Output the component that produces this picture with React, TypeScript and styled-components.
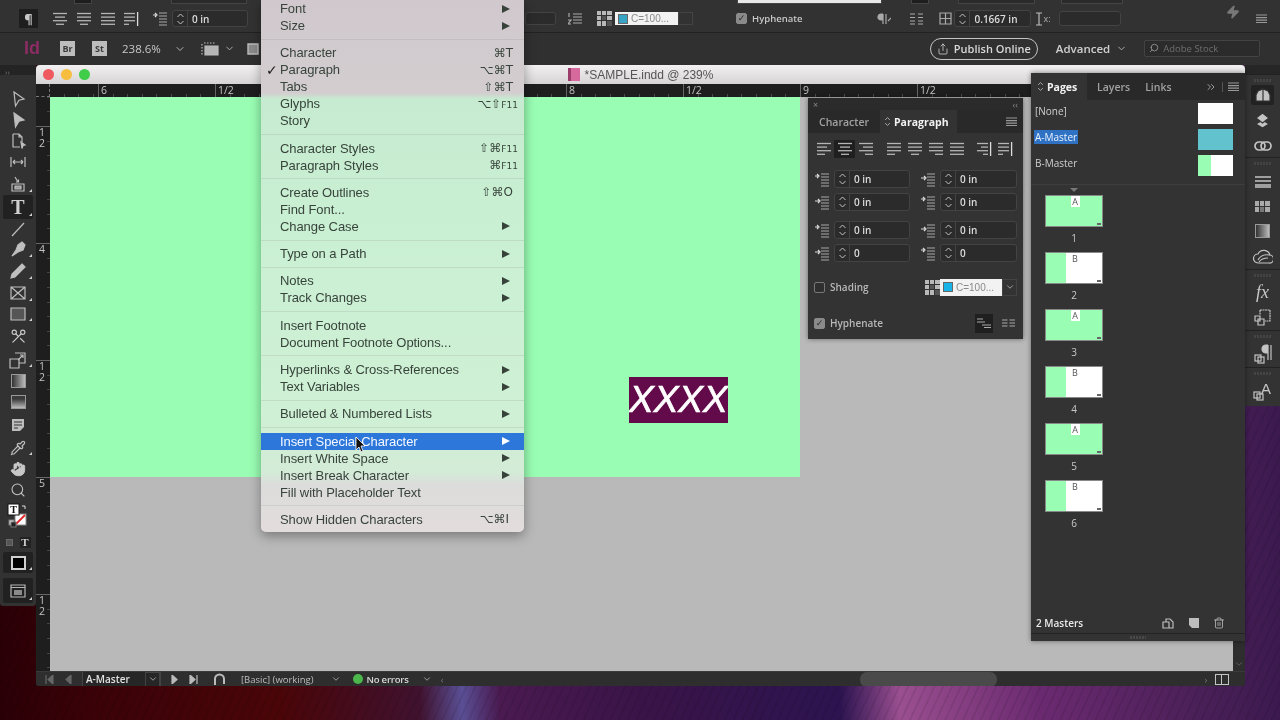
import React from "react";
import styled, { createGlobalStyle } from "styled-components";
import { ChevronDown, ChevronsRight, Hand, Pipette, Scissors, Search, Share, Trash2, Zap } from "lucide-react";

const GlobalStyle = createGlobalStyle`
  html, body { margin: 0; padding: 0; background: #2c0207; overflow: hidden; }
  * { box-sizing: border-box; }
`;

const UI = `"Open Sans", "Liberation Sans", sans-serif`;

const Desktop = styled.div`
  position: relative;
  width: 1280px;
  height: 720px;
  overflow: hidden;
  display: flex;
  flex-direction: column;
  font-family: ${UI};
  color: #d6d6d6;
  filter: blur(0.35px);
  background:
    repeating-linear-gradient(115deg, rgba(0, 0, 0, 0.08) 0 2px, transparent 2px 8px),
    linear-gradient(90deg, #2a0006 0, #3a0208 90px, #4a0508 280px, #40122f 420px, #5a4f95 462px, #4a1a50 500px, #3a1448 640px, #2c1450 840px, #9a4f90 900px, #6b2a70 1040px, #4a2058 1200px, #3c1a50 100%);
`;

/* application bars */
const ControlBar = styled.div`
  height: 33px;
  background: #323232;
  border-bottom: 1px solid #222;
  flex: none;
`;
const TopSlice = styled.div`
  height: 5px;
  display: flex;
  align-items: flex-start;
`;
const SliceBox = styled.div<{ $w: number; $ml: number; $bg?: string }>`
  width: ${(p) => p.$w}px;
  height: 4px;
  margin-left: ${(p) => p.$ml}px;
  background: ${(p) => p.$bg ?? "#2a2a2a"};
  border: 1px solid #444;
  border-top: none;
`;
const ControlRow = styled.div`
  height: 27px;
  display: flex;
  align-items: center;
  font-size: 10px;
`;
const Gap = styled.span<{ $w: number }>`
  flex: none;
  width: ${(p) => p.$w}px;
`;
const ParaButton = styled.div`
  width: 19px;
  height: 19px;
  background: #1e1e1e;
  display: flex;
  align-items: center;
  justify-content: center;
  font-size: 13px;
  font-weight: 700;
  color: #c8c8c8;
`;
const ControlLabel = styled.span`
  font-size: 9.5px;
  font-weight: 600;
  color: #c8c8c8;
`;
const AxisLabel = styled.span`
  font-size: 9px;
  color: #b0b0b0;
`;
const BoltMark = styled(Zap)`
  margin-top: -14px;
`;
const AppBar = styled.div`
  height: 32px;
  flex: none;
  display: flex;
  align-items: center;
  padding-bottom: 1px;
  background: #303030;
  font-size: 11.5px;
  color: #c8c8c8;
`;
const AppLogo = styled.span`
  font-size: 18px;
  font-weight: 700;
  color: #8b2c63;
  font-family: "Liberation Sans", sans-serif;
`;
const BridgeChip = styled.span`
  width: 15px;
  height: 15px;
  background: #bdbdbd;
  color: #3a3a3a;
  font-size: 9px;
  font-weight: 700;
  display: flex;
  align-items: center;
  justify-content: center;
`;
const PublishPill = styled.div`
  width: 108px;
  height: 22px;
  border: 1px solid #c4c4c4;
  border-radius: 11px;
  display: flex;
  align-items: center;
  justify-content: center;
  gap: 5px;
  font-size: 11px;
  font-weight: 600;
  color: #d8d8d8;
`;
const AdvancedLabel = styled.span`
  font-size: 11.5px;
  font-weight: 600;
  color: #cfcfcf;
`;
const StockSearch = styled.div`
  width: 116px;
  height: 17px;
  margin-top: -1px;
  background: #2b2b2b;
  border: 1px solid #434343;
  border-radius: 2px;
  display: flex;
  align-items: center;
  gap: 4px;
  padding-left: 4px;
  font-size: 9.5px;
  color: #6f6f6f;
`;
const StockLens = styled(Search)`
  transform: scaleX(-1);
`;

/* workspace */
const Workspace = styled.div`
  flex: 1;
  display: flex;
  align-items: flex-start;
  min-height: 0;
`;
const ToolPanel = styled.div`
  width: 36px;
  height: 541px;
  flex: none;
  background: #323232;
  border-radius: 0 0 3px 3px;
  display: flex;
  flex-direction: column;
  align-items: center;
`;
const ToolHeader = styled.div`
  width: 100%;
  height: 23px;
  flex: none;
  font-size: 8px;
  color: #777;
  padding: 1px 0 0 5px;
  background: linear-gradient(#242424 0 10px, #323232 10px);
`;
const ToolSlot = styled.div<{ $h: number; $corner?: boolean; $active?: boolean }>`
  position: relative;
  width: 30px;
  height: ${(p) => p.$h}px;
  flex: none;
  display: flex;
  align-items: center;
  justify-content: center;
  color: #bdbdbd;
  border-radius: 2px;
  background: ${(p) => (p.$active ? "#212121" : "transparent")};
  &::after {
    content: "";
    display: ${(p) => (p.$corner ? "block" : "none")};
    position: absolute;
    right: 1px;
    bottom: 3px;
    border-left: 3px solid transparent;
    border-bottom: 3px solid #cfcfcf;
  }
`;
const GlyphTool = styled.span`
  font: 700 20px "Liberation Serif", serif;
  color: #cfcfcf;
  line-height: 1;
`;
const ScissorMark = styled(Scissors)`
  transform: scaleX(-1) rotate(90deg);
`;
const GradientChip = styled.span<{ $feather?: boolean }>`
  width: 15px;
  height: 14px;
  border: 1px solid #999;
  background: ${(p) =>
    p.$feather ? "linear-gradient(#3a3a3a 25%, #bbb)" : "linear-gradient(90deg, #333, #bbb)"};
`;
const ModeChip = styled.span`
  width: 15px;
  height: 14px;
  border: 2px solid #d0d0d0;
  background: #000;
`;
const FormatRow = styled.span`
  display: flex;
  align-items: center;
  gap: 7px;
`;
const FormatBox = styled.span`
  width: 7px;
  height: 7px;
  background: #555;
  border: 1px solid #6a6a6a;
`;
const FormatT = styled.span`
  width: 11px;
  height: 11px;
  background: #222;
  color: #d0d0d0;
  font: 700 11px/11px "Liberation Serif", serif;
  text-align: center;
`;

const DocWindow = styled.div`
  width: 1209px;
  height: 621px;
  flex: none;
  display: flex;
  flex-direction: column;
  background: #2e2e2e;
  border-radius: 4px 4px 3px 3px;
  overflow: hidden;
`;
const TitleBar = styled.div`
  height: 19px;
  flex: none;
  display: flex;
  align-items: center;
  background: linear-gradient(#f2f0f0, #d6d4d4);
  font: 12px "Liberation Sans", sans-serif;
  color: #555;
`;
const TitleSide = styled.div`
  flex: 1;
  display: flex;
  align-items: center;
  gap: 7px;
  padding-left: 7px;
`;
const Light = styled.span<{ $c: string }>`
  width: 11px;
  height: 11px;
  border-radius: 50%;
  background: ${(p) => p.$c};
`;
const TitleText = styled.div`
  display: flex;
  align-items: center;
  gap: 5px;
`;
const DocBadge = styled.span`
  width: 12px;
  height: 13px;
  background: #d66a9c;
  border-left: 3px solid #9c3d6c;
`;
const HRuler = styled.div`
  height: 13px;
  flex: none;
  display: flex;
  background: #1e1e1e;
  overflow: hidden;
  font: 10.5px "Open Sans", sans-serif;
  color: #c4c4c4;
`;
const RulerOrigin = styled.div`
  width: 14px;
  flex: none;
  border-right: 1px dashed #777;
  border-bottom: 1px dashed #777;
`;
const RulerLead = styled.div`
  width: 48px;
  flex: none;
  background-image: repeating-linear-gradient(90deg, transparent 0 13.6px, #4c4c4c 13.6px 14.6px);
  background-size: 100% 3px;
  background-position: 0 bottom;
  background-repeat: no-repeat;
`;
const RulerCell = styled.div`
  width: 117px;
  flex: none;
  border-left: 1px solid #666;
  padding-left: 2px;
  line-height: 13px;
  background-image: repeating-linear-gradient(90deg, transparent 0 13.6px, #4c4c4c 13.6px 14.6px);
  background-size: 100% 3px;
  background-position: 0 bottom;
  background-repeat: no-repeat;
`;
const DocBody = styled.div`
  flex: 1;
  display: flex;
  min-height: 0;
`;
const VRuler = styled.div`
  width: 14px;
  flex: none;
  background: #1e1e1e;
  overflow: hidden;
  font: 10.5px/11px "Open Sans", sans-serif;
  color: #c4c4c4;
`;
const VRulerCell = styled.div<{ $h: number; $bare?: boolean }>`
  height: ${(p) => p.$h}px;
  border-top: ${(p) => (p.$bare ? "none" : "1px solid #666")};
  padding: 0 0 0 3px;
  white-space: pre-line;
  background-image: repeating-linear-gradient(0deg, transparent 0 13.6px, #444 13.6px 14.6px);
  background-size: 3px 100%;
  background-position: right 0;
  background-repeat: no-repeat;
`;
const Pasteboard = styled.div`
  flex: 1;
  background: #b9b9b9;
  min-width: 0;
`;
const SpreadPage = styled.div`
  position: relative;
  width: 750px;
  height: 380px;
  background: #99fdb3;
`;
const TextFrame = styled.div`
  position: absolute;
  left: 579px;
  top: 280px;
  width: 99px;
  height: 46px;
  background: #620a4a;
  overflow: hidden;
  color: #fff;
  font: italic 37px/46px "Liberation Sans", sans-serif;
  -webkit-text-stroke: 0.7px #fff;
  white-space: nowrap;
`;
const ScrollColumn = styled.div`
  width: 12px;
  flex: none;
  background: #2e2e2e;
  display: flex;
  align-items: flex-end;
  justify-content: center;
  padding-bottom: 2px;
  color: #666;
`;
const StatusBar = styled.div`
  height: 15px;
  flex: none;
  display: flex;
  align-items: center;
  background: #2e2e2e;
  border-top: 1px solid #3a3a3a;
  font-size: 9.5px;
  color: #bdbdbd;
`;
const PageField = styled.div`
  width: 79px;
  height: 15px;
  flex: none;
  display: flex;
  align-items: center;
  justify-content: space-between;
  border: 1px solid #444;
  border-width: 0 1px;
  background: #262626;
  padding-left: 3px;
  font-size: 10px;
  font-weight: 600;
  color: #e2e2e2;
`;
const NoErrorsDot = styled.span`
  width: 10px;
  height: 10px;
  border-radius: 50%;
  background: #4cb84c;
`;
const NoErrors = styled.span`
  font-weight: 600;
  letter-spacing: -0.2px;
  color: #d8d8d8;
`;
const DimGlyph = styled.span`
  color: #777;
`;
const ScrollThumb = styled.span`
  width: 137px;
  height: 15px;
  flex: none;
  background: #4a4a4a;
  border-radius: 7px;
`;
const SplitIcon = styled.span`
  width: 14px;
  height: 11px;
  flex: none;
  border: 1px solid #c4c4c4;
  background: linear-gradient(90deg, transparent 5px, #c4c4c4 5px 6px, transparent 6px);
`;

/* right dock */
const Dock = styled.div`
  width: 35px;
  height: 341px;
  flex: none;
  background: #333;
  display: flex;
  flex-direction: column;
  align-items: center;
  color: #bdbdbd;
`;
const DockHead = styled.div`
  width: 100%;
  height: 9px;
  flex: none;
  background: #262626;
`;
const DockGrip = styled.div`
  width: 100%;
  height: 11px;
  flex: none;
  border-top: 1px solid #222;
  display: flex;
  justify-content: center;
  padding-top: 4px;
  &::after {
    content: "";
    width: 17px;
    height: 3px;
    background: repeating-linear-gradient(90deg, #444 0 2px, transparent 2px 3px);
  }
`;
const DockSlot = styled.div<{ $h?: number; $active?: boolean }>`
  width: 23px;
  height: ${(p) => p.$h ?? 25}px;
  flex: none;
  display: flex;
  align-items: center;
  justify-content: center;
  background: ${(p) => (p.$active ? "#222" : "transparent")};
  border-radius: 2px;
`;
const FxGlyph = styled.span`
  font: italic 18px "Liberation Serif", serif;
  color: #c8c8c8;
`;

/* floating panels */
const ParagraphPanel = styled.div`
  position: absolute;
  left: 808px;
  top: 98px;
  width: 215px;
  height: 241px;
  z-index: 5;
  background: #333;
  box-shadow: 0 0 5px rgba(0, 0, 0, 0.45);
  font-size: 10px;
  padding-bottom: 6px;
`;
const PanelHead = styled.div`
  height: 12px;
  display: flex;
  align-items: center;
  justify-content: space-between;
  padding: 0 5px;
  background: #2b2b2b;
  font-size: 9px;
  color: #8a8a8a;
`;
const TabStrip = styled.div<{ $h: number }>`
  height: ${(p) => p.$h}px;
  display: flex;
  align-items: stretch;
  background: #292929;
`;
const Tab = styled.div<{ $active?: boolean; $w?: number; $ml?: number; $pl?: number }>`
  width: ${(p) => (p.$w ? `${p.$w}px` : "auto")};
  display: flex;
  align-items: center;
  gap: 2px;
  padding-left: ${(p) => p.$pl ?? 0}px;
  margin-left: ${(p) => p.$ml ?? 0}px;
  background: ${(p) => (p.$active ? "#333" : "transparent")};
  color: ${(p) => (p.$active ? "#f2f2f2" : "#a2a2a2")};
  font-weight: ${(p) => (p.$active ? 700 : 600)};
  font-size: 10.5px;
`;
const TabEnd = styled.div`
  margin-left: auto;
  display: flex;
  align-items: center;
  gap: 5px;
  padding-right: 6px;
  color: #999;
`;
const TabDivider = styled.span`
  width: 1px;
  height: 10px;
  background: #555;
`;
const AlignRow = styled.div`
  height: 18px;
  margin-top: 7px;
  padding-left: 5px;
  display: flex;
`;
const AlignSlot = styled.div<{ $ml?: number; $active?: boolean }>`
  width: 21px;
  height: 18px;
  margin-left: ${(p) => p.$ml ?? 0}px;
  display: flex;
  align-items: center;
  justify-content: center;
  background: ${(p) => (p.$active ? "#1f1f1f" : "transparent")};
`;
const FieldRow = styled.div<{ $mt: number }>`
  margin-top: ${(p) => p.$mt}px;
  padding-left: 7px;
  display: flex;
  gap: 11px;
`;
const FieldCell = styled.div`
  display: flex;
  align-items: center;
  gap: 4px;
`;
const SpinField = styled.div<{ $w: number; $h?: number }>`
  width: ${(p) => p.$w}px;
  height: ${(p) => p.$h ?? 18}px;
  flex: none;
  display: flex;
  align-items: center;
  background: #2b2b2b;
  border: 1px solid #434343;
  border-radius: 3px;
  font-size: 10px;
  font-weight: 600;
  color: #dcdcdc;
`;
const SpinArrows = styled.span`
  width: 15px;
  height: 100%;
  flex: none;
  display: flex;
  align-items: center;
  justify-content: center;
  border-right: 1px solid #434343;
  margin-right: 4px;
`;
const OptionRow = styled.div<{ $mt: number; $h: number }>`
  margin-top: ${(p) => p.$mt}px;
  height: ${(p) => p.$h}px;
  padding: 0 6px;
  display: flex;
  align-items: center;
  font-weight: 600;
  font-size: 10px;
  color: #b8b8b8;
`;
const CheckBox = styled.span<{ $on?: boolean }>`
  width: 11px;
  height: 11px;
  flex: none;
  margin-right: 5px;
  border: 1px solid ${(p) => (p.$on ? "#8a8a8a" : "#777")};
  background: ${(p) => (p.$on ? "#8a8a8a" : "#2f2f2f")};
  border-radius: 2px;
  color: #2a2a2a;
  font: 700 9px/9px "DejaVu Sans", sans-serif;
  text-align: center;
`;
const Swatch = styled.div<{ $w: number; $h: number }>`
  width: ${(p) => p.$w}px;
  height: ${(p) => p.$h}px;
  flex: none;
  display: flex;
  align-items: center;
  gap: 3px;
  padding-left: 3px;
  background: #f2f2f2;
  color: #8a8a8a;
  font: 10px "Liberation Sans", sans-serif;
`;
const SwatchChip = styled.span<{ $c: string }>`
  width: 10px;
  height: 10px;
  flex: none;
  background: ${(p) => p.$c};
  border: 1px solid #666;
`;
const SwatchArrow = styled.span<{ $h: number }>`
  width: 15px;
  height: ${(p) => p.$h}px;
  flex: none;
  display: flex;
  align-items: center;
  justify-content: center;
  border: 1px solid #434343;
  color: #aaa;
`;
const HyphenIconBox = styled.span<{ $on?: boolean }>`
  width: 18px;
  height: 19px;
  flex: none;
  display: flex;
  align-items: center;
  justify-content: center;
  background: ${(p) => (p.$on ? "#1f1f1f" : "transparent")};
`;
const Push = styled.span`
  margin-left: auto;
`;

const PagesPanel = styled.div`
  position: absolute;
  left: 1031px;
  top: 73px;
  width: 214px;
  height: 568px;
  z-index: 5;
  background: #333;
  box-shadow: 0 0 5px rgba(0, 0, 0, 0.45);
  display: flex;
  flex-direction: column;
  font-size: 10px;
`;
const MasterList = styled.div`
  padding: 0 12px 6px 3px;
  border-bottom: 1px solid #3e3e3e;
`;
const MasterRow = styled.div`
  height: 26px;
  display: flex;
  align-items: center;
  justify-content: space-between;
  font-size: 10px;
  color: #cfcfcf;
`;
const MasterName = styled.span<{ $sel?: boolean }>`
  margin-top: -4px;
  padding: 0 1px;
  color: ${(p) => (p.$sel ? "#e8f2ff" : "#cfcfcf")};
  background: ${(p) => (p.$sel ? "#2f72c4" : "transparent")};
`;
const MasterThumb = styled.span<{ $bg: string }>`
  width: 35px;
  height: 21px;
  flex: none;
  background: ${(p) => p.$bg};
`;
const ThumbList = styled.div`
  padding-left: 14px;
  width: 72px;
`;
const ThumbMark = styled.div`
  width: 58px;
  height: 10px;
  display: flex;
  justify-content: center;
  padding-top: 3px;
  &::after {
    content: "";
    width: 0;
    height: 0;
    border: 4px solid transparent;
    border-top-color: #777;
    border-bottom: none;
  }
`;
const PageThumb = styled.div<{ $b: boolean }>`
  position: relative;
  width: 58px;
  height: 32px;
  border: 1px solid #888;
  background: ${(p) =>
    p.$b ? "linear-gradient(90deg, #99fdb3 20px, #fff 20px)" : "#99fdb3"};
  text-align: center;
  font: 9px/11px "Open Sans", sans-serif;
  color: #555;
  &::after {
    content: "";
    position: absolute;
    right: 1px;
    bottom: 1px;
    width: 4px;
    height: 2px;
    background: #666;
  }
`;
const ThumbMaster = styled.span<{ $b: boolean }>`
  display: inline-block;
  width: 9px;
  height: 11px;
  margin-left: 2px;
  background: ${(p) => (p.$b ? "transparent" : "#fff")};
`;
const ThumbNo = styled.div`
  width: 58px;
  height: 25px;
  text-align: center;
  line-height: 23px;
  font-size: 10px;
  color: #c9c9c9;
`;
const PanelFoot = styled.div`
  margin-top: auto;
  height: 21px;
  display: flex;
  align-items: center;
  padding: 0 20px 0 5px;
  color: #bdbdbd;
  font-size: 10px;
  font-weight: 600;
  border-bottom: 1px solid #222;
`;
const FootLabel = styled.span`
  color: #eaeaea;
  flex: 1;
`;
const FootIcons = styled.span`
  display: flex;
  align-items: center;
  gap: 14px;
`;
const PanelGrip = styled.div`
  height: 7px;
  display: flex;
  justify-content: center;
  &::after {
    content: "";
    margin-top: 2px;
    width: 16px;
    height: 3px;
    background: repeating-linear-gradient(90deg, #484848 0 2px, transparent 2px 3px);
  }
`;

/* Type menu */
const Menu = styled.div`
  position: absolute;
  left: 261px;
  top: 0;
  width: 263px;
  height: 532px;
  z-index: 10;
  padding-bottom: 4px;
  border-radius: 0 0 5px 5px;
  box-shadow: 0 4px 12px rgba(0, 0, 0, 0.35);
  background: linear-gradient(
    #d0c8cc 0,
    #d3cdd0 93px,
    #c6ebd0 99px,
    #caf0d3 240px,
    #cff0d4 420px,
    #d3ebd7 473px,
    #dcdcdb 485px,
    #e3dcdd 100%
  );
  font: 13px "Liberation Sans", "DejaVu Sans", sans-serif;
  letter-spacing: -0.08px;
  color: #37433b;
`;
const MenuRow = styled.div<{ $active?: boolean }>`
  height: 17px;
  display: flex;
  align-items: center;
  color: ${(p) => (p.$active ? "#f4f8ff" : "inherit")};
  background: ${(p) => (p.$active ? "#2d77da" : "transparent")};
`;
const CheckCol = styled.span`
  width: 19px;
  flex: none;
  padding-left: 5px;
  font-size: 14px;
  color: #1d1d1d;
`;
const Shortcut = styled.span<{ $pr: number }>`
  margin-left: auto;
  padding-right: ${(p) => p.$pr}px;
  font-family: "DejaVu Sans", sans-serif;
  font-size: 12px;
  letter-spacing: 0;
`;
const SmallKey = styled.span`
  font-size: 9px;
`;
const MenuArrow = styled.span<{ $active?: boolean }>`
  margin-left: auto;
  margin-right: 14px;
  border-left: 8px solid ${(p) => (p.$active ? "#fff" : "#36423a")};
  border-top: 4px solid transparent;
  border-bottom: 4px solid transparent;
`;
const MenuSep = styled.div`
  height: 10.3px;
  display: flex;
  align-items: center;
  &::after {
    content: "";
    width: 100%;
    height: 1px;
    background: rgba(140, 140, 140, 0.2);
  }
`;
const Cursor = styled.svg`
  position: absolute;
  left: 355px;
  top: 436px;
  z-index: 12;
`;

/* drawings */
const Ic = styled.svg<{ $c?: string; $fill?: string; $sw?: number }>`
  flex: none;
  fill: ${(p) => p.$fill ?? "none"};
  stroke: ${(p) => p.$c ?? "#bdbdbd"};
  stroke-width: ${(p) => p.$sw ?? 1.2};
`;

const alignShapes: Record<string, number[][]> = {
  left: [[1, 15], [1, 11], [1, 15], [1, 9]],
  center: [[1, 15], [3, 13], [1, 15], [4, 12]],
  right: [[1, 15], [5, 15], [1, 15], [7, 15]],
  just: [[1, 15], [1, 15], [1, 15], [1, 9]],
  justC: [[1, 15], [1, 15], [1, 15], [4, 12]],
  justR: [[1, 15], [1, 15], [1, 15], [7, 15]],
  justA: [[1, 15], [1, 15], [1, 15], [1, 15]],
};

function AlignIcon({ kind, spine }: { kind: string; spine?: boolean }) {
  return (
    <Ic width="16" height="14" viewBox="0 0 16 14" $sw={1.3} $c="#b5b5b5">
      {alignShapes[kind].map((l, i) => (
        <line key={i} x1={l[0]} x2={spine ? l[1] - 3 : l[1]} y1={1.5 + i * 3.6} y2={1.5 + i * 3.6} />
      ))}
      {spine && <line x1="14.6" x2="14.6" y1="0" y2="14" stroke="#ddd" />}
    </Ic>
  );
}

function IndentIcon({ v }: { v: number }) {
  return (
    <Ic width="15" height="15" viewBox="0 0 15 15" $c="#a8a8a8">
      <path d="M6 2h8M6 5h8M6 8h8M6 11h8M6 14h8" />
      <path d={v % 2 ? "M0 6h4M3 4l2 2-2 2" : "M0 4h3M2 2l2 2-2 2"} stroke="#ddd" />
    </Ic>
  );
}

function UpDown({ h = 14 }: { h?: number }) {
  return (
    <Ic width="9" height={h} viewBox="0 0 9 14" $c="#c4c4c4" $sw={1}>
      <path d="M1.500 5l3-3 3 3M1.500 9l3 3 3-3" />
    </Ic>
  );
}

function Chevron({ s = 10, c = "#b5b5b5" }: { s?: number; c?: string }) {
  return <ChevronDown size={s} color={c} strokeWidth={2} />;
}

function SwatchGrid() {
  return (
    <Ic width="15" height="15" viewBox="0 0 15 15" $c="none" $fill="#b9b9b9">
      <path d="M0 0h4v4H0zM5 0h4v4H5zM10 0h5v4h-5zM0 5h4v4H0zM10 5h5v4h-5zM5 10h4v5H5zM0 10h4v5H0z" />
      <path d="M5 5h4v4H5zM10 10h5v5h-5z" fill="#555" />
    </Ic>
  );
}

function MenuLines() {
  return (
    <Ic width="11" height="9" viewBox="0 0 11 9" $c="#999">
      <path d="M0 1h11M0 3.600h11M0 6.200h11M0 8.600h11" />
    </Ic>
  );
}

function OverlapBadge() {
  return (
    <g fill="none" stroke="#c4c4c4">
      <rect x="1" y="11" width="6" height="6" />
      <rect x="4" y="13" width="6" height="6" />
    </g>
  );
}

const menuRows: Array<
  | "sep"
  | { label: string; keys?: React.ReactNode; arrow?: boolean; check?: boolean; active?: boolean; pr?: number }
> = [
  { label: "Font", arrow: true },
  { label: "Size", arrow: true },
  "sep",
  { label: "Character", keys: "⌘T" },
  { label: "Paragraph", keys: "⌥⌘T", check: true },
  { label: "Tabs", keys: "⇧⌘T" },
  { label: "Glyphs", keys: <>⌥⇧<SmallKey>F11</SmallKey></>, pr: 6 },
  { label: "Story" },
  "sep",
  { label: "Character Styles", keys: <>⇧⌘<SmallKey>F11</SmallKey></>, pr: 6 },
  { label: "Paragraph Styles", keys: <>⌘<SmallKey>F11</SmallKey></>, pr: 6 },
  "sep",
  { label: "Create Outlines", keys: "⇧⌘O" },
  { label: "Find Font..." },
  { label: "Change Case", arrow: true },
  "sep",
  { label: "Type on a Path", arrow: true },
  "sep",
  { label: "Notes", arrow: true },
  { label: "Track Changes", arrow: true },
  "sep",
  { label: "Insert Footnote" },
  { label: "Document Footnote Options..." },
  "sep",
  { label: "Hyperlinks & Cross-References", arrow: true },
  { label: "Text Variables", arrow: true },
  "sep",
  { label: "Bulleted & Numbered Lists", arrow: true },
  "sep",
  { label: "Insert Special Character", arrow: true, active: true },
  { label: "Insert White Space", arrow: true },
  { label: "Insert Break Character", arrow: true },
  { label: "Fill with Placeholder Text" },
  "sep",
  { label: "Show Hidden Characters", keys: "⌥⌘I", pr: 15 },
];

const rulerLabels = ["6", "1/2", "", "", "8", "1/2", "9", "1/2", "", ""];
const vRuler = ["1\n2", "4", "1\n2", "5", "1\n2"];
const pageThumbs = ["A", "B", "A", "B", "A", "B"];

function Tools() {
  return (
    <ToolPanel>
      <ToolHeader>››</ToolHeader>
      <ToolSlot $h={21}>
        <Ic width="18" height="18" viewBox="0 0 18 18"><path d="M5 2l10 7-5 1.200L6.500 16z" /></Ic>
      </ToolSlot>
      <ToolSlot $h={21}>
        <Ic width="18" height="18" viewBox="0 0 18 18" $fill="#bdbdbd"><path d="M5 2l10 7-5 1.200L6.500 16z" /></Ic>
      </ToolSlot>
      <ToolSlot $h={21}>
        <Ic width="18" height="18" viewBox="0 0 18 18">
          <path d="M4 2h6l3 3v5M13 5h-3V2M4 2v13h7" />
          <path d="M12 10l4 3-2 .5-1 3z" fill="#bdbdbd" />
        </Ic>
      </ToolSlot>
      <ToolSlot $h={21}>
        <Ic width="18" height="18" viewBox="0 0 18 18"><path d="M2 4v10M16 4v10M4 9h10M4 9l2-2M4 9l2 2M14 9l-2-2M14 9l-2 2" /></Ic>
      </ToolSlot>
      <ToolSlot $h={23} $corner>
        <Ic width="18" height="18" viewBox="0 0 18 18">
          <path d="M3 9h12v7H3z" />
          <path d="M6 11h6v3H6z" fill="#999" />
          <path d="M6 2l3 5M7 7h2.500V4.500" />
        </Ic>
      </ToolSlot>
      <ToolSlot $h={24} $corner $active>
        <GlyphTool>T</GlyphTool>
      </ToolSlot>
      <ToolSlot $h={19}>
        <Ic width="18" height="18" viewBox="0 0 18 18"><path d="M3 16L15 3" /></Ic>
      </ToolSlot>
      <ToolSlot $h={22} $corner>
        <Ic width="18" height="18" viewBox="0 0 18 18" $fill="#c0c0c0"><path d="M13 2l3 3-2 5-5 2-6 4 4-6 2-5z" /></Ic>
      </ToolSlot>
      <ToolSlot $h={22} $corner>
        <Ic width="18" height="18" viewBox="0 0 18 18" $fill="#c0c0c0"><path d="M13 2l3 3-10 10-4 1 1-4z" /></Ic>
      </ToolSlot>
      <ToolSlot $h={22} $corner>
        <Ic width="18" height="18" viewBox="0 0 18 18"><path d="M2 3h14v12H2zM2 3l14 12M16 3L2 15" /></Ic>
      </ToolSlot>
      <ToolSlot $h={20} $corner>
        <Ic width="18" height="18" viewBox="0 0 18 18" $fill="#555"><path d="M2 3h14v12H2z" /></Ic>
      </ToolSlot>
      <ToolSlot $h={25}>
        <ScissorMark size={17} color="#c8c8c8" strokeWidth={1.6} />
      </ToolSlot>
      <ToolSlot $h={21} $corner>
        <Ic width="18" height="18" viewBox="0 0 18 18">
          <path d="M1 8h9v9H1zM6 2h10v10H10" />
          <path d="M9 9l5-5M11 4h3v3" />
        </Ic>
      </ToolSlot>
      <ToolSlot $h={21}><GradientChip /></ToolSlot>
      <ToolSlot $h={22}><GradientChip $feather /></ToolSlot>
      <ToolSlot $h={24}>
        <Ic width="16" height="16" viewBox="0 0 16 16" $fill="#bdbdbd" $c="none">
          <path d="M2 2h12v8l-4 4H2z" />
          <path d="M4 5h8M4 8h8M4 11h4" stroke="#333" fill="none" />
        </Ic>
      </ToolSlot>
      <ToolSlot $h={21} $corner><Pipette size={16} color="#c0c0c0" strokeWidth={1.7} /></ToolSlot>
      <ToolSlot $h={21}><Hand size={16} color="#c8c8c8" fill="#c8c8c8" strokeWidth={1.4} /></ToolSlot>
      <ToolSlot $h={21}><Search size={16} color="#c4c4c4" strokeWidth={1.6} /></ToolSlot>
      <ToolSlot $h={32}>
        <Ic width="22" height="26" viewBox="0 0 22 26" $c="#ddd" $sw={1}>
          <rect x="8" y="11" width="11" height="11" fill="#fff" stroke="#888" />
          <path d="M9 21L18 12" stroke="#e0262c" strokeWidth="1.8" />
          <rect x="1" y="1" width="11" height="11" fill="#fff" stroke="#111" />
          <text x="6.500" y="10" fontSize="10" fontWeight="700" textAnchor="middle" fill="#111" stroke="none" fontFamily="Liberation Serif">T</text>
          <path d="M15 3h3v3" />
          <rect x="2" y="17" width="5" height="5" fill="#ddd" stroke="#777" />
          <rect x="4" y="19" width="5" height="5" fill="#222" stroke="#777" />
        </Ic>
      </ToolSlot>
      <ToolSlot $h={20}>
        <FormatRow><FormatBox /><FormatT>T</FormatT></FormatRow>
      </ToolSlot>
      <ToolSlot $h={21} $corner $active><ModeChip /></ToolSlot>
      <ToolSlot $h={5} />
      <ToolSlot $h={25} $corner $active>
        <Ic width="16" height="14" viewBox="0 0 16 14" $c="#b5b5b5">
          <path d="M1 1h14v12H1zM1 3.500h14" />
          <path d="M4 6h8v5H4z" fill="#8a8a8a" stroke="none" />
        </Ic>
      </ToolSlot>
    </ToolPanel>
  );
}

function RightDock() {
  return (
    <Dock>
      <DockHead />
      <DockGrip />
      <DockSlot $active $h={20}>
        <Ic width="18" height="16" viewBox="0 0 18 16" $c="#333" $fill="#c4c4c4">
          <path d="M9 2L4 4 2 8v6h7zM9 2l5 2 2 4v6H9z" />
        </Ic>
      </DockSlot>
      <DockSlot $h={29}>
        <Ic width="17" height="16" viewBox="0 0 17 16" $c="#333" $fill="#c4c4c4">
          <path d="M8.500 8L15 12l-6.500 4L2 12z" />
          <path d="M8.500 1L15 6l-6.500 5L2 6z" />
        </Ic>
      </DockSlot>
      <DockSlot $h={23}>
        <Ic width="18" height="12" viewBox="0 0 18 12" $sw={1.7} $c="#c4c4c4">
          <rect x="1" y="2" width="10" height="8" rx="4" />
          <rect x="7" y="2" width="10" height="8" rx="4" />
        </Ic>
      </DockSlot>
      <DockGrip />
      <DockSlot $h={27}>
        <Ic width="16" height="12" viewBox="0 0 16 12" $c="#c4c4c4" $sw={1.4}><path d="M0 1h16M0 5h16M0 9h16M0 11h16" /></Ic>
      </DockSlot>
      <DockSlot $h={23}>
        <Ic width="15" height="11" viewBox="0 0 15 11" $c="none" $fill="#aaa">
          <path d="M0 0h4v5H0zM5 0h4v5H5zM10 0h5v5h-5zM0 6h4v5H0zM10 6h5v5h-5z" />
          <path d="M5 6h4v5H5z" fill="#777" />
        </Ic>
      </DockSlot>
      <DockSlot $h={25}><GradientChip /></DockSlot>
      <DockSlot $h={26}>
        <Ic width="20" height="15" viewBox="0 0 20 15" $c="#c4c4c4" $sw={1.2}>
          <path d="M5 14a4.500 4.500 0 0 1 0-9A6.500 6.500 0 0 1 17 6a4 4 0 0 1-1 8z" />
          <path d="M5 11c2-4 6-6 12-5M6 13c2-3 5-4 9-4" />
        </Ic>
      </DockSlot>
      <DockGrip />
      <DockSlot $h={24}><FxGlyph>fx</FxGlyph></DockSlot>
      <DockSlot $h={26}>
        <Ic width="17" height="17" viewBox="0 0 17 17" $c="#c4c4c4">
          <path d="M6 1h10v11h-5M6 1v5" strokeDasharray="2 0.500" />
          <path d="M1 7h5v5H1zM4 10h6v6H4z" />
        </Ic>
      </DockSlot>
      <DockGrip />
      <DockSlot $h={26}>
        <Ic width="18" height="20" viewBox="0 0 18 20">
          <OverlapBadge />
          <path d="M14 1v15M17 1v15M14 1h-2a4 4 0 0 0 0 8h2" stroke="#c4c4c4" fill="#c4c4c4" />
        </Ic>
      </DockSlot>
      <DockGrip />
      <DockSlot $h={26}>
        <Ic width="20" height="20" viewBox="0 0 20 20">
          <OverlapBadge />
          <text x="13" y="13" fontSize="15" textAnchor="middle" fill="#c4c4c4" stroke="none" fontFamily="Liberation Sans">A</text>
        </Ic>
      </DockSlot>
    </Dock>
  );
}

function ParagraphFields() {
  const rows: Array<{ mt: number; v: string }> = [
    { mt: 12, v: "0 in" },
    { mt: 5, v: "0 in" },
    { mt: 10, v: "0 in" },
    { mt: 5, v: "0" },
  ];
  return (
    <>
      {rows.map((r, i) => (
        <FieldRow key={i} $mt={r.mt}>
          {[0, 1].map((c) => (
            <FieldCell key={c}>
              <IndentIcon v={i + c} />
              <SpinField $w={c ? 77 : 76}>
                <SpinArrows><UpDown /></SpinArrows>
                {r.v}
              </SpinField>
            </FieldCell>
          ))}
        </FieldRow>
      ))}
    </>
  );
}

export default function App() {
  return (
    <Desktop>
      <GlobalStyle />

      <ControlBar>
        <TopSlice>
          <SliceBox $w={18} $ml={74} $bg="#1e1e1e" />
          <SliceBox $w={76} $ml={79} />
          <SliceBox $w={145} $ml={490} $bg="#e8e8e8" />
          <SliceBox $w={18} $ml={29} $bg="#1e1e1e" />
          <SliceBox $w={77} $ml={29} />
          <SliceBox $w={62} $ml={26} />
        </TopSlice>
        <ControlRow>
          <Gap $w={19} />
          <ParaButton>¶</ParaButton>
          <Gap $w={14} />
          <AlignIcon kind="center" />
          <Gap $w={8} />
          <AlignIcon kind="justC" />
          <Gap $w={8} />
          <AlignIcon kind="justA" />
          <Gap $w={7} />
          <AlignIcon kind="just" spine />
          <Gap $w={14} />
          <IndentIcon v={0} />
          <Gap $w={4} />
          <SpinField $w={76} $h={17}>
            <SpinArrows><UpDown /></SpinArrows>0 in
          </SpinField>
          <Gap $w={277} />
          <SpinField $w={31} $h={13} />
          <Gap $w={12} />
          <Ic width="14" height="13" viewBox="0 0 14 13" $c="#aaa"><path d="M5 2h9M5 5h9M5 8h9M5 11h9M1 1v4M0 8h3l-3 4h3" /></Ic>
          <Gap $w={15} />
          <SwatchGrid />
          <Gap $w={3} />
          <Swatch $w={63} $h={13}>
            <SwatchChip $c="#37a4c6" />
            C=100...
          </Swatch>
          <SwatchArrow $h={13} />
          <Gap $w={43} />
          <CheckBox $on>✓</CheckBox>
          <ControlLabel>Hyphenate</ControlLabel>
          <Gap $w={75} />
          <Ic width="14" height="12" viewBox="0 0 14 12" $c="#aaa" $fill="#aaa"><path d="M6 1v10M9 1v10M6 1H4a3 3 0 0 0 0 6h2M11 8l3-3" /></Ic>
          <Gap $w={19} />
          <Ic width="13" height="12" viewBox="0 0 13 12" $c="#aaa"><path d="M0 1h5M8 1h5M0 4.500h5M8 4.500h5M0 8h5M8 8h5M0 11h5M8 11h5" /></Ic>
          <Gap $w={16} />
          <Ic width="13" height="13" viewBox="0 0 13 13" $c="#aaa"><path d="M1 1h11v11H1zM6.500 1v11M1 6.500h11" /></Ic>
          <Gap $w={2} />
          <SpinField $w={77} $h={17}>
            <SpinArrows><UpDown /></SpinArrows>0.1667 in
          </SpinField>
          <Gap $w={4} />
          <Ic width="8" height="14" viewBox="0 0 8 14" $c="#bbb"><path d="M1 1h6M1 13h6M4 1v12" /></Ic>
          <AxisLabel>x:</AxisLabel>
          <Gap $w={8} />
          <SpinField $w={62} $h={15} />
          <Gap $w={105} />
          <BoltMark size={14} color="#777" fill="#777" />
          <Gap $w={16} />
          <MenuLines />
        </ControlRow>
      </ControlBar>

      <AppBar>
        <Gap $w={24} />
        <AppLogo>Id</AppLogo>
        <Gap $w={20} />
        <BridgeChip>Br</BridgeChip>
        <Gap $w={17} />
        <BridgeChip>St</BridgeChip>
        <Gap $w={15} />
        <span>238.6%</span>
        <Gap $w={13} />
        <Chevron s={12} />
        <Gap $w={15} />
        <Ic width="18" height="14" viewBox="0 0 18 14" $c="#bbb" $fill="#b5b5b5">
          <path d="M4 4h13v9H4z" />
          <path d="M1 2v11M3 1h12" strokeDasharray="1.500 1.500" fill="none" />
        </Ic>
        <Gap $w={5} />
        <Chevron s={11} />
        <Gap $w={11} />
        <Ic width="14" height="14" viewBox="0 0 14 14" $c="#bbb" $fill="#8a8a8a" $sw={1.4}>
          <path d="M2 2h10v10H2z" />
        </Ic>
        <Gap $w={670} />
        <PublishPill>
          <Share size={12} color="#d0d0d0" strokeWidth={1.6} />
          Publish Online
        </PublishPill>
        <Gap $w={18} />
        <AdvancedLabel>Advanced</AdvancedLabel>
        <Gap $w={6} />
        <Chevron s={11} />
        <Gap $w={17} />
        <StockSearch>
          <StockLens size={10} color="#999" strokeWidth={2} />
          Adobe Stock
        </StockSearch>
      </AppBar>

      <Workspace>
        <Tools />
        <DocWindow>
          <TitleBar>
            <TitleSide>
              <Light $c="#ef5a61" />
              <Light $c="#f6bd3f" />
              <Light $c="#3fcd4a" />
            </TitleSide>
            <TitleText>
              <DocBadge />
              *SAMPLE.indd @ 239%
            </TitleText>
            <TitleSide />
          </TitleBar>
          <HRuler>
            <RulerOrigin />
            <RulerLead />
            {rulerLabels.map((l, i) => (
              <RulerCell key={i}>{l}</RulerCell>
            ))}
          </HRuler>
          <DocBody>
            <VRuler>
              <VRulerCell $h={29} $bare />
              {vRuler.map((l, i) => (
                <VRulerCell key={i} $h={117}>{l}</VRulerCell>
              ))}
            </VRuler>
            <Pasteboard>
              <SpreadPage>
                <TextFrame>XXXX</TextFrame>
              </SpreadPage>
            </Pasteboard>
            <ScrollColumn>
              <Chevron s={10} c="#666" />
            </ScrollColumn>
          </DocBody>
          <StatusBar>
            <Gap $w={9} />
            <Ic width="9" height="9" viewBox="0 0 9 9" $c="#666" $fill="#666"><path d="M1 0v9M8 0L3 4.500 8 9z" /></Ic>
            <Gap $w={11} />
            <Ic width="7" height="9" viewBox="0 0 7 9" $c="#666" $fill="#666"><path d="M6 0L1 4.500 6 9z" /></Ic>
            <Gap $w={10} />
            <PageField>
              A-Master
              <SwatchArrow $h={15}><Chevron s={10} /></SwatchArrow>
            </PageField>
            <Gap $w={10} />
            <Ic width="7" height="9" viewBox="0 0 7 9" $c="#bbb" $fill="#bbb"><path d="M1 0l5 4.500L1 9z" /></Ic>
            <Gap $w={11} />
            <Ic width="9" height="9" viewBox="0 0 9 9" $c="#bbb" $fill="#bbb"><path d="M8 0v9M1 0l5 4.500L1 9z" /></Ic>
            <Gap $w={15} />
            <Ic width="13" height="13" viewBox="0 0 13 13" $c="#bbb" $sw={2}><path d="M2 12V6a4.500 4.500 0 0 1 9 0v5" /></Ic>
            <Gap $w={15} />
            <span>[Basic] (working)</span>
            <Gap $w={17} />
            <Chevron s={10} />
            <Gap $w={12} />
            <NoErrorsDot />
            <Gap $w={4} />
            <NoErrors>No errors</NoErrors>
            <Gap $w={13} />
            <Chevron s={10} />
            <Gap $w={9} />
            <DimGlyph>‹</DimGlyph>
            <Gap $w={417} />
            <ScrollThumb />
            <Gap $w={207} />
            <DimGlyph>›</DimGlyph>
            <Gap $w={8} />
            <SplitIcon />
          </StatusBar>
        </DocWindow>
        <RightDock />
      </Workspace>

      <ParagraphPanel>
        <PanelHead>
          <span>×</span>
          <span>‹‹</span>
        </PanelHead>
        <TabStrip $h={23}>
          <Tab $ml={11}>Character</Tab>
          <Tab $active $w={77} $ml={11} $pl={3}>
            <UpDown h={11} />
            Paragraph
          </Tab>
          <TabEnd><MenuLines /></TabEnd>
        </TabStrip>
        <AlignRow>
          <AlignSlot><AlignIcon kind="left" /></AlignSlot>
          <AlignSlot $active><AlignIcon kind="center" /></AlignSlot>
          <AlignSlot><AlignIcon kind="right" /></AlignSlot>
          <AlignSlot $ml={7}><AlignIcon kind="just" /></AlignSlot>
          <AlignSlot><AlignIcon kind="justC" /></AlignSlot>
          <AlignSlot><AlignIcon kind="justR" /></AlignSlot>
          <AlignSlot><AlignIcon kind="justA" /></AlignSlot>
          <AlignSlot $ml={6}><AlignIcon kind="right" spine /></AlignSlot>
          <AlignSlot><AlignIcon kind="just" spine /></AlignSlot>
        </AlignRow>
        <ParagraphFields />
        <OptionRow $mt={16} $h={18}>
          <CheckBox />
          Shading
          <Push />
          <SwatchGrid />
          <Swatch $w={62} $h={17}>
            <SwatchChip $c="#18b4e8" />
            C=100...
          </Swatch>
          <SwatchArrow $h={17}><Chevron s={10} /></SwatchArrow>
        </OptionRow>
        <OptionRow $mt={17} $h={20}>
          <CheckBox $on>✓</CheckBox>
          Hyphenate
          <Push />
          <HyphenIconBox $on>
            <Ic width="14" height="10" viewBox="0 0 14 10" $c="#aaa"><path d="M0 1h6M0 4h8M5 7h9M7 9.500h7" /></Ic>
          </HyphenIconBox>
          <Gap $w={6} />
          <HyphenIconBox>
            <Ic width="13" height="8" viewBox="0 0 13 8" $c="#aaa"><path d="M0 1h5.500M7.500 1H13M0 4h5.500M7.500 4H13M0 7h5.500M7.500 7H13" /></Ic>
          </HyphenIconBox>
        </OptionRow>
      </ParagraphPanel>

      <PagesPanel>
        <TabStrip $h={27}>
          <Tab $active $w={56} $pl={5}>
            <UpDown h={11} />
            Pages
          </Tab>
          <Tab $ml={10}>Layers</Tab>
          <Tab $ml={15}>Links</Tab>
          <TabEnd>
            <ChevronsRight size={12} color="#aaa" strokeWidth={1.8} />
            <TabDivider />
            <MenuLines />
          </TabEnd>
        </TabStrip>
        <MasterList>
          <MasterRow>
            <MasterName>[None]</MasterName>
            <MasterThumb $bg="#fff" />
          </MasterRow>
          <MasterRow>
            <MasterName $sel>A-Master</MasterName>
            <MasterThumb $bg="#62c3cf" />
          </MasterRow>
          <MasterRow>
            <MasterName>B-Master</MasterName>
            <MasterThumb $bg="linear-gradient(90deg, #99fdb3 13px, #fff 13px)" />
          </MasterRow>
        </MasterList>
        <ThumbList>
          <ThumbMark />
          {pageThumbs.map((m, i) => (
            <div key={i}>
              <PageThumb $b={m === "B"}>
                <ThumbMaster $b={m === "B"}>{m}</ThumbMaster>
              </PageThumb>
              <ThumbNo>{i + 1}</ThumbNo>
            </div>
          ))}
        </ThumbList>
        <PanelFoot>
          <FootLabel>2 Masters</FootLabel>
          <FootIcons>
            <Ic width="13" height="12" viewBox="0 0 13 12" $c="#bdbdbd"><path d="M1 5h6v6H1zM4 5V2h4l3 3v6H7" /></Ic>
            <Ic width="10" height="10" viewBox="0 0 10 10" $c="none" $fill="#bdbdbd"><path d="M0 0h10v10H3L0 7z" /></Ic>
            <Trash2 size={12} color="#bdbdbd" strokeWidth={1.6} />
          </FootIcons>
        </PanelFoot>
        <PanelGrip />
      </PagesPanel>

      <Menu>
        {menuRows.map((r, i) =>
          r === "sep" ? (
            <MenuSep key={i} />
          ) : (
            <MenuRow key={i} $active={r.active}>
              <CheckCol>{r.check ? "✓" : ""}</CheckCol>
              {r.label}
              {r.keys && <Shortcut $pr={r.pr ?? 11}>{r.keys}</Shortcut>}
              {r.arrow && <MenuArrow $active={r.active} />}
            </MenuRow>
          )
        )}
      </Menu>

      <Cursor width="12" height="17" viewBox="0 0 12 17">
        <path d="M1 1v13l3-3 2 5 2-1-2-5h4z" fill="#111" stroke="#fff" strokeWidth="0.8" />
      </Cursor>
    </Desktop>
  );
}
